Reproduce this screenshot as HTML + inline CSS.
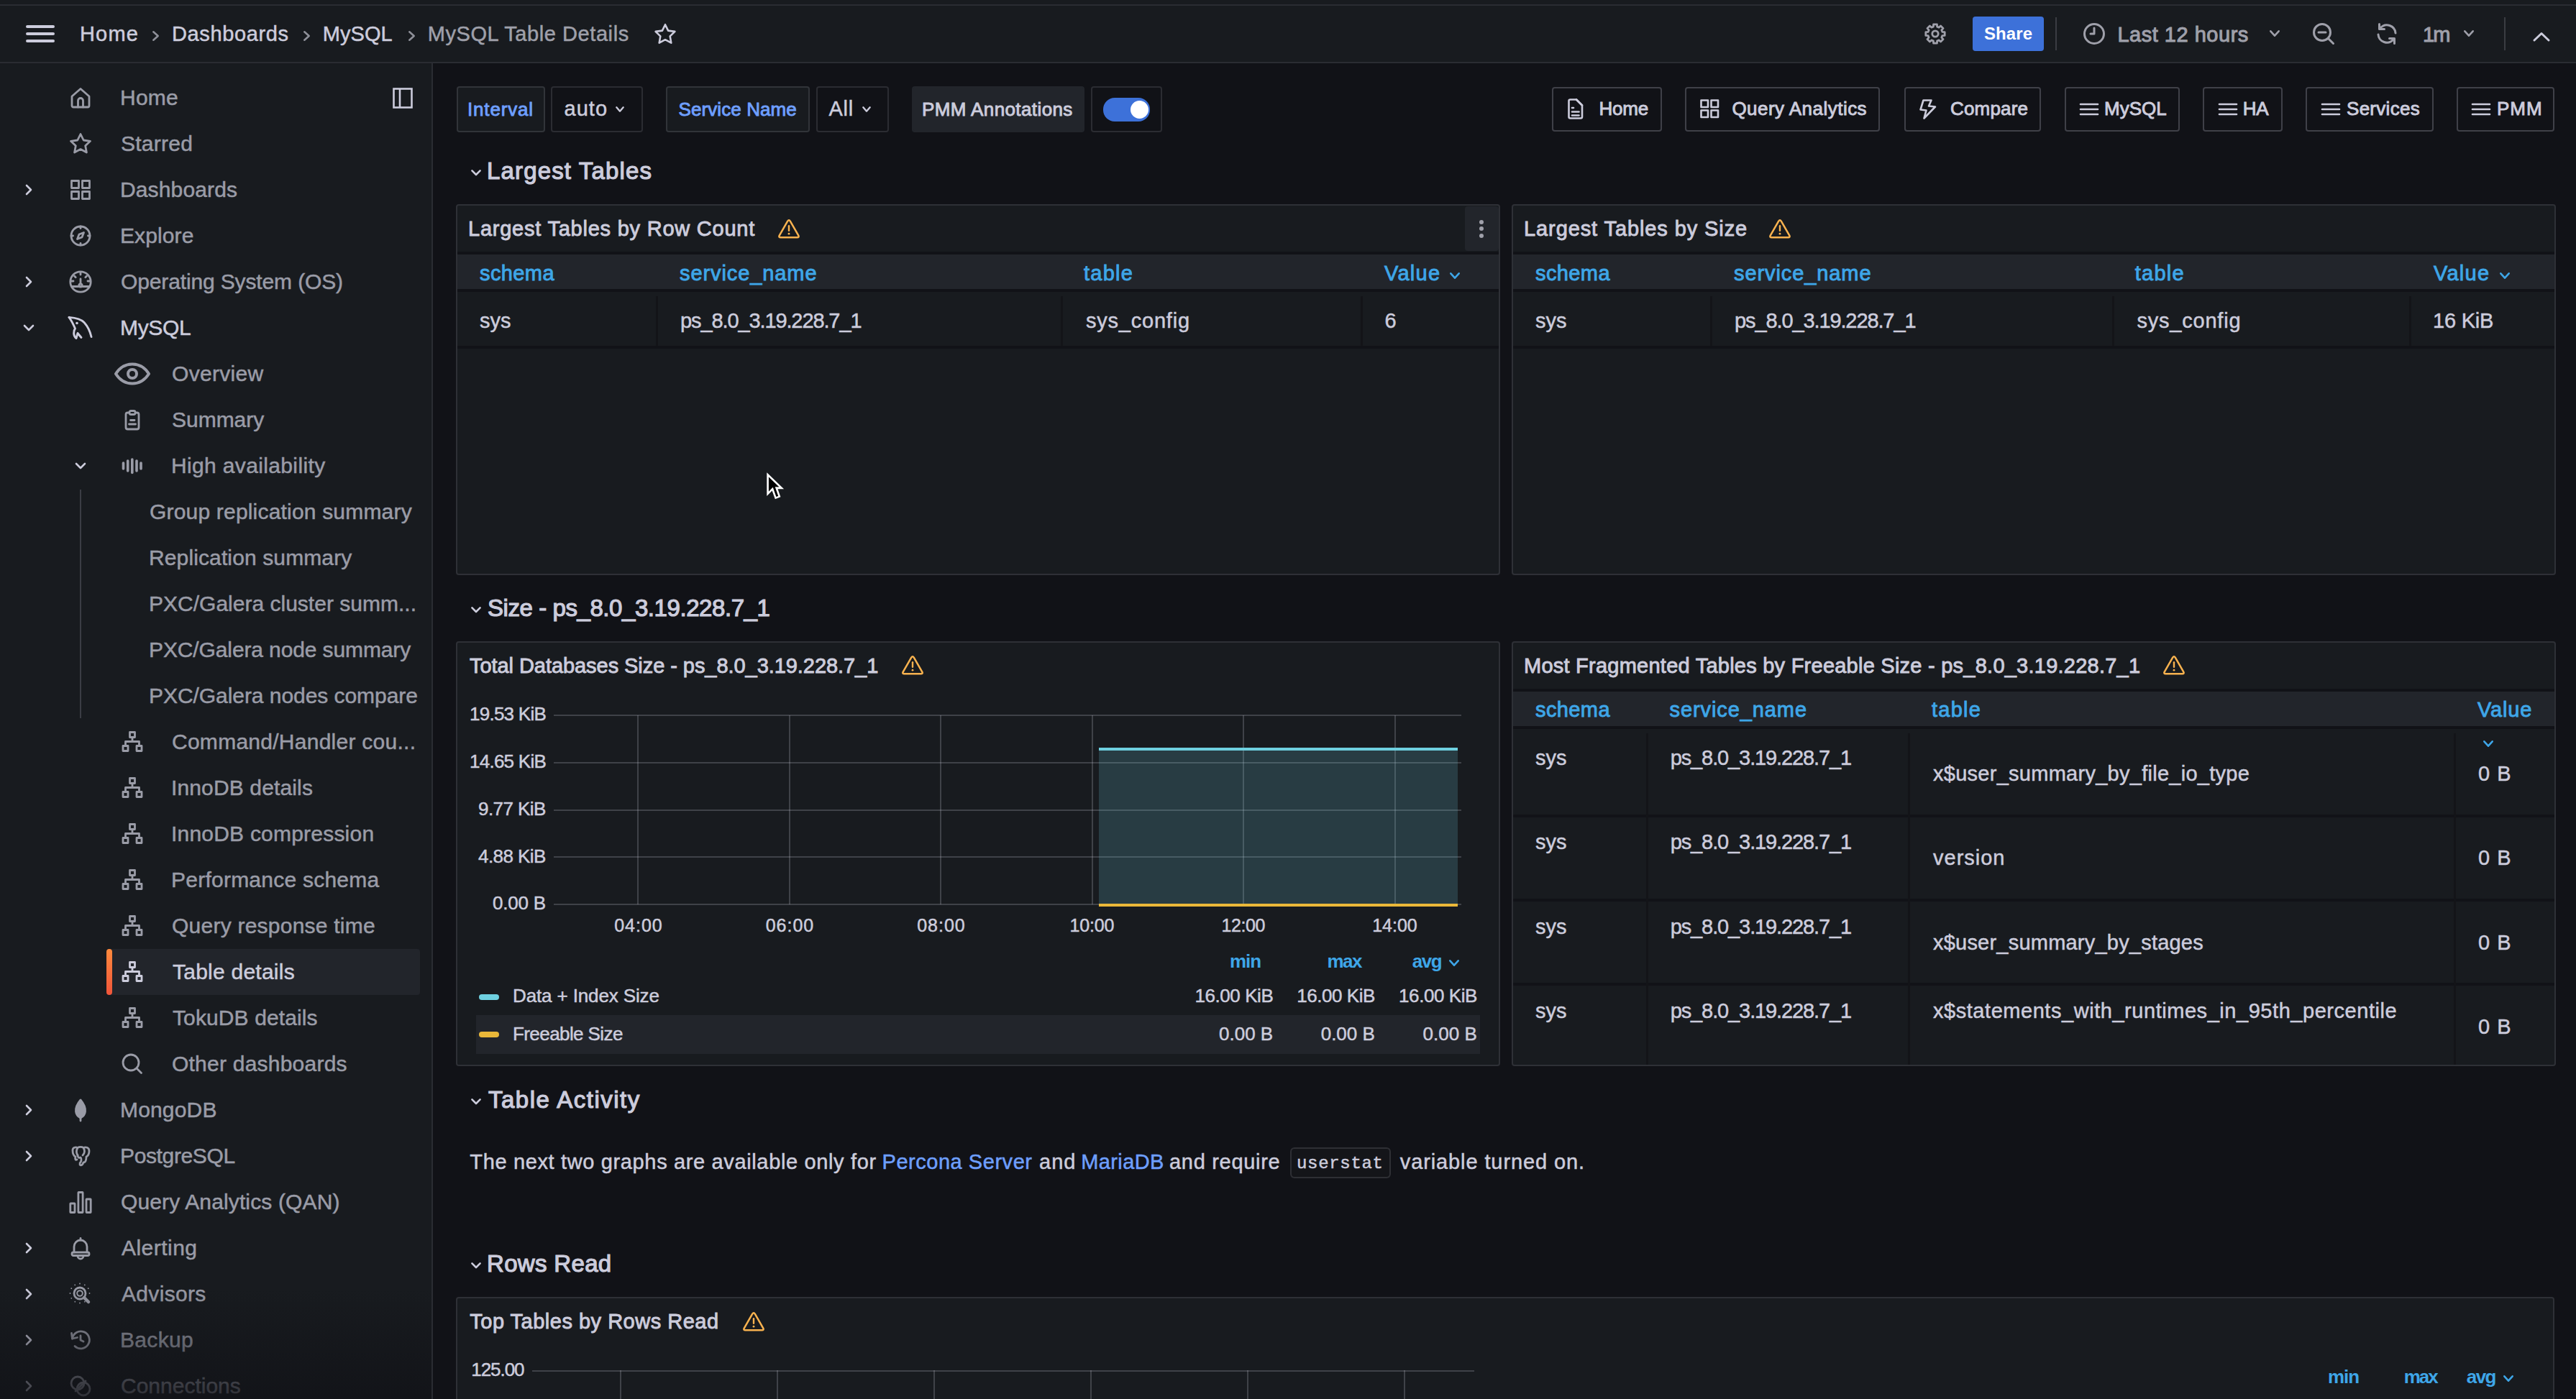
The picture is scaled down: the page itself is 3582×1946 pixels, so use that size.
<!DOCTYPE html>
<html><head><meta charset="utf-8"><title>MySQL Table Details</title>
<style>
html,body{margin:0;padding:0;}
body{width:3582px;height:1946px;overflow:hidden;position:relative;background:#111217;font-family:"Liberation Sans",sans-serif;color:#ccccdc;}
.t{position:absolute;white-space:nowrap;line-height:1;}
.r{position:absolute;}
svg.r{overflow:visible;}
</style></head><body>
<div class="r" style="left:0.00px;top:0.00px;width:3582.00px;height:88.00px;background:#181b1f;"></div>
<div class="r" style="left:0.00px;top:6.00px;width:3582.00px;height:2.00px;background:#2a2c32;"></div>
<div class="r" style="left:0.00px;top:86.00px;width:3582.00px;height:2.00px;background:#2a2c32;"></div>
<div class="r" style="left:0.00px;top:88.00px;width:600.00px;height:1858.00px;background:#181b1f;"></div>
<div class="r" style="left:600.00px;top:88.00px;width:2.00px;height:1858.00px;background:#2a2c32;"></div>
<div class="r" style="left:36.00px;top:35.00px;width:40.00px;height:4.00px;background:#ccccdc;border-radius:2px;"></div>
<div class="r" style="left:36.00px;top:45.00px;width:40.00px;height:4.00px;background:#ccccdc;border-radius:2px;"></div>
<div class="r" style="left:36.00px;top:55.00px;width:40.00px;height:4.00px;background:#ccccdc;border-radius:2px;"></div>
<div class="t" style="left:111.00px;top:33.00px;font-size:29px;color:#ccccdc;letter-spacing:1.167px;-webkit-text-stroke:0.50px #ccccdc;">Home</div>
<svg class="r" style="left:211.50px;top:43.00px;" width="9.00" height="14.00" viewBox="0 0 9 14"><polyline points="1.3,1.3 7.7,7 1.3,12.7" fill="none" stroke="#8e9099" stroke-width="2.6" stroke-linecap="round" stroke-linejoin="round"/></svg>
<div class="t" style="left:239.00px;top:33.00px;font-size:29px;color:#ccccdc;letter-spacing:0.622px;-webkit-text-stroke:0.50px #ccccdc;">Dashboards</div>
<svg class="r" style="left:421.60px;top:43.00px;" width="9.00" height="14.00" viewBox="0 0 9 14"><polyline points="1.3,1.3 7.7,7 1.3,12.7" fill="none" stroke="#8e9099" stroke-width="2.6" stroke-linecap="round" stroke-linejoin="round"/></svg>
<div class="t" style="left:448.70px;top:33.00px;font-size:29px;color:#ccccdc;letter-spacing:0.075px;-webkit-text-stroke:0.50px #ccccdc;">MySQL</div>
<svg class="r" style="left:567.80px;top:43.00px;" width="9.00" height="14.00" viewBox="0 0 9 14"><polyline points="1.3,1.3 7.7,7 1.3,12.7" fill="none" stroke="#8e9099" stroke-width="2.6" stroke-linecap="round" stroke-linejoin="round"/></svg>
<div class="t" style="left:594.70px;top:33.00px;font-size:29px;color:#9fa0aa;letter-spacing:0.572px;-webkit-text-stroke:0.50px #9fa0aa;">MySQL Table Details</div>
<svg class="r" style="left:909.00px;top:32.00px;" width="32.00" height="30.00" viewBox="0 0 32 30"><path d="M16 2.2 L20.1 10.6 L29.4 11.9 L22.7 18.4 L24.3 27.6 L16 23.2 L7.7 27.6 L9.3 18.4 L2.6 11.9 L11.9 10.6 Z" fill="none" stroke="#ccccdc" stroke-width="2.6" stroke-linejoin="round"/></svg>
<svg class="r" style="left:2668.00px;top:24.00px;" width="46.00" height="46.00" viewBox="0 0 46 46"><polygon points="19.10,13.58 20.36,13.15 20.56,9.82 25.44,9.82 25.64,13.15 26.90,13.58 28.10,14.17 30.59,11.96 34.04,15.41 31.83,17.90 32.42,19.10 32.85,20.36 36.18,20.56 36.18,25.44 32.85,25.64 32.42,26.90 31.83,28.10 34.04,30.59 30.59,34.04 28.10,31.83 26.90,32.42 25.64,32.85 25.44,36.18 20.56,36.18 20.36,32.85 19.10,32.42 17.90,31.83 15.41,34.04 11.96,30.59 14.17,28.10 13.58,26.90 13.15,25.64 9.82,25.44 9.82,20.56 13.15,20.36 13.58,19.10 14.17,17.90 11.96,15.41 15.41,11.96 17.90,14.17" fill="none" stroke="#9fa0aa" stroke-width="2.8" stroke-linejoin="round"/><circle cx="23" cy="23" r="4.2" fill="none" stroke="#9fa0aa" stroke-width="2.8"/></svg>
<div class="r" style="left:2743.00px;top:23.00px;width:99.00px;height:48.00px;background:#3d71d9;border-radius:4px;"></div>
<div class="t" style="left:2759.00px;top:35.00px;font-size:24px;color:#ffffff;font-weight:700;letter-spacing:0.100px;">Share</div>
<div class="r" style="left:2858.00px;top:24.00px;width:2.00px;height:46.00px;background:#3a3c42;"></div>
<svg class="r" style="left:2896.00px;top:31.00px;" width="32.00" height="32.00" viewBox="0 0 32 32"><circle cx="16" cy="16" r="13.5" fill="none" stroke="#9fa0aa" stroke-width="3"/><polyline points="16,8 16,16 11,16" fill="none" stroke="#9fa0aa" stroke-width="3" stroke-linecap="round" stroke-linejoin="round"/></svg>
<div class="t" style="left:2944.40px;top:34.00px;font-size:29px;color:#9fa0aa;letter-spacing:0.517px;-webkit-text-stroke:1.00px #9fa0aa;">Last 12 hours</div>
<svg class="r" style="left:3155.60px;top:42.00px;" width="14.00" height="9.00" viewBox="0 0 14 9"><polyline points="1.3,1.3 7,7.7 12.7,1.3" fill="none" stroke="#9fa0aa" stroke-width="2.6" stroke-linecap="round" stroke-linejoin="round"/></svg>
<svg class="r" style="left:3215.00px;top:31.00px;" width="32.00" height="32.00" viewBox="0 0 32 32"><circle cx="14" cy="14" r="11.5" fill="none" stroke="#9fa0aa" stroke-width="3"/><line x1="22.5" y1="22.5" x2="29.5" y2="29.5" stroke="#9fa0aa" stroke-width="3" stroke-linecap="round"/><line x1="9" y1="14" x2="19" y2="14" stroke="#9fa0aa" stroke-width="3" stroke-linecap="round"/></svg>
<svg class="r" style="left:3303.00px;top:31.00px;" width="32.00" height="32.00" viewBox="0 0 32 32"><g fill="none" stroke="#9fa0aa" stroke-width="3" stroke-linecap="round" stroke-linejoin="round"><path d="M28 15 A12 12 0 0 0 7 8"/><polyline points="5.5,2.5 5.5,9.5 12.5,9.5"/><path d="M4 17 A12 12 0 0 0 25 24"/><polyline points="26.5,29.5 26.5,22.5 19.5,22.5"/></g></svg>
<div class="t" style="left:3369.00px;top:34.00px;font-size:29px;color:#9fa0aa;letter-spacing:-2.000px;-webkit-text-stroke:1.00px #9fa0aa;">1m</div>
<svg class="r" style="left:3425.50px;top:42.00px;" width="14.00" height="9.00" viewBox="0 0 14 9"><polyline points="1.3,1.3 7,7.7 12.7,1.3" fill="none" stroke="#9fa0aa" stroke-width="2.6" stroke-linecap="round" stroke-linejoin="round"/></svg>
<div class="r" style="left:3482.00px;top:24.00px;width:2.00px;height:46.00px;background:#3a3c42;"></div>
<svg class="r" style="left:3522.00px;top:44.00px;" width="24.00" height="14.00" viewBox="0 0 24 14"><polyline points="2,12 12,2.5 22,12" fill="none" stroke="#ccccdc" stroke-width="3" stroke-linecap="round" stroke-linejoin="round"/></svg>
<div class="r" style="left:148.00px;top:1320.00px;width:436.00px;height:64.00px;background:#22252b;border-radius:4px;"></div>
<div class="r" style="left:148.00px;top:1320.00px;width:8.00px;height:64.00px;background:linear-gradient(180deg,#ff8a3d,#f0553a);border-radius:4px;"></div>
<div class="r" style="left:110.50px;top:681.00px;width:2.00px;height:318.00px;background:#3b3d44;"></div>
<svg class="r" style="left:96.00px;top:120.00px;" width="32.00" height="32.00" viewBox="0 0 32 32"><g fill="none" stroke="#9a9ca7" stroke-width="2.8" stroke-linecap="round" stroke-linejoin="round"><path d="M4 14 L16 3.5 L28 14 V27 a2 2 0 0 1 -2 2 H6 a2 2 0 0 1 -2 -2 Z"/><path d="M12.5 29 V20 a3.5 3.5 0 0 1 7 0 V29"/></g></svg>
<div class="t" style="left:167.00px;top:121.00px;font-size:30px;color:#9a9ca7;letter-spacing:0.233px;-webkit-text-stroke:0.50px #9a9ca7;">Home</div>
<svg class="r" style="left:96.00px;top:184.00px;" width="32.00" height="32.00" viewBox="0 0 32 32"><g fill="none" stroke="#9a9ca7" stroke-width="2.8" stroke-linecap="round" stroke-linejoin="round"><path d="M16 2.5 L20.2 11 L29.5 12.3 L22.7 18.8 L24.4 28 L16 23.6 L7.6 28 L9.3 18.8 L2.5 12.3 L11.8 11 Z"/></g></svg>
<div class="t" style="left:168.00px;top:185.00px;font-size:30px;color:#9a9ca7;letter-spacing:0.250px;-webkit-text-stroke:0.50px #9a9ca7;">Starred</div>
<svg class="r" style="left:35.00px;top:256.00px;" width="10.00" height="16.00" viewBox="0 0 10 16"><polyline points="2,2 8,8 2,14" fill="none" stroke="#ccccdc" stroke-width="2.6" stroke-linecap="round" stroke-linejoin="round"/></svg>
<svg class="r" style="left:96.00px;top:248.00px;" width="32.00" height="32.00" viewBox="0 0 32 32"><g fill="none" stroke="#9a9ca7" stroke-width="2.8" stroke-linecap="round" stroke-linejoin="round"><rect x="3.5" y="3.5" width="10" height="10"/><rect x="18.5" y="3.5" width="10" height="10"/><rect x="3.5" y="18.5" width="10" height="10"/><rect x="18.5" y="18.5" width="10" height="10"/></g></svg>
<div class="t" style="left:167.00px;top:249.00px;font-size:30px;color:#9a9ca7;letter-spacing:0.133px;-webkit-text-stroke:0.50px #9a9ca7;">Dashboards</div>
<svg class="r" style="left:96.00px;top:312.00px;" width="32.00" height="32.00" viewBox="0 0 32 32"><g fill="none" stroke="#9a9ca7" stroke-width="2.8" stroke-linecap="round" stroke-linejoin="round"><circle cx="16" cy="16" r="13"/><path d="M20.5 11.5 L18 18 L11.5 20.5 L14 14 Z"/><line x1="16" y1="3" x2="16" y2="5.5"/><line x1="16" y1="26.5" x2="16" y2="29"/><line x1="3" y1="16" x2="5.5" y2="16"/><line x1="26.5" y1="16" x2="29" y2="16"/></g></svg>
<div class="t" style="left:167.00px;top:313.00px;font-size:30px;color:#9a9ca7;letter-spacing:0.100px;-webkit-text-stroke:0.50px #9a9ca7;">Explore</div>
<svg class="r" style="left:35.00px;top:384.00px;" width="10.00" height="16.00" viewBox="0 0 10 16"><polyline points="2,2 8,8 2,14" fill="none" stroke="#ccccdc" stroke-width="2.6" stroke-linecap="round" stroke-linejoin="round"/></svg>
<svg class="r" style="left:96.00px;top:376.00px;" width="32.00" height="32.00" viewBox="0 0 32 32"><g fill="none" stroke="#9a9ca7" stroke-width="2.8" stroke-linecap="round" stroke-linejoin="round"><circle cx="16" cy="16" r="14.2"/><path d="M3.5 22.5 H28.5"/><path d="M16 3.5 V6"/><path d="M7.5 8 L9.2 9.7"/><path d="M24.5 8 L22.8 9.7"/><path d="M3.5 15 H6"/><path d="M26 15 H28.5"/><path d="M16 12 V19"/><circle cx="16" cy="21" r="2.2"/></g></svg>
<div class="t" style="left:168.00px;top:377.00px;font-size:30px;color:#9a9ca7;letter-spacing:-0.135px;-webkit-text-stroke:0.50px #9a9ca7;">Operating System (OS)</div>
<svg class="r" style="left:32.00px;top:451.00px;" width="16.00" height="10.00" viewBox="0 0 16 10"><polyline points="2,2 8,8 14,2" fill="none" stroke="#ccccdc" stroke-width="2.6" stroke-linecap="round" stroke-linejoin="round"/></svg>
<svg class="r" style="left:92.00px;top:436.00px;" width="40.00" height="40.00" viewBox="0 0 40 40"><g fill="none" stroke="#ccccdc" stroke-width="2.9" stroke-linecap="round" stroke-linejoin="round"><path d="M4 5.4 C 12 6, 20 7, 25 12.5 C 30 18, 33.5 26, 35 32.5"/><path d="M4 5.4 C 6 8, 9 13, 12.5 21 C 10 24, 9.5 31, 14 34.5 C 15 31, 15.5 29, 16 27.5 L 21 33.5"/></g><circle cx="15" cy="13.5" r="1.8" fill="#ccccdc"/></svg>
<div class="t" style="left:167.00px;top:441.00px;font-size:30px;color:#ccccdc;letter-spacing:-0.325px;-webkit-text-stroke:0.50px #ccccdc;">MySQL</div>
<svg class="r" style="left:158.00px;top:502.00px;" width="52.00" height="36.00" viewBox="0 0 52 36"><path d="M3 18 C 9 8.5, 17 4.5, 26 4.5 C 35 4.5, 43 8.5, 49 18 C 43 27.5, 35 31.5, 26 31.5 C 17 31.5, 9 27.5, 3 18 Z" fill="none" stroke="#9a9ca7" stroke-width="4" stroke-linejoin="round"/><circle cx="26" cy="18" r="6" fill="none" stroke="#9a9ca7" stroke-width="4"/></svg>
<div class="t" style="left:239.00px;top:505.00px;font-size:30px;color:#9a9ca7;letter-spacing:0.314px;-webkit-text-stroke:0.50px #9a9ca7;">Overview</div>
<svg class="r" style="left:167.50px;top:568.00px;" width="32.00" height="32.00" viewBox="0 0 32 32"><g fill="none" stroke="#9a9ca7" stroke-width="2.8" stroke-linecap="round" stroke-linejoin="round"><path d="M11.5 6 H9.5 a2.5 2.5 0 0 0 -2.5 2.5 V26.5 a2.5 2.5 0 0 0 2.5 2.5 H22.5 a2.5 2.5 0 0 0 2.5 -2.5 V8.5 a2.5 2.5 0 0 0 -2.5 -2.5 H20.5"/><rect x="12" y="3.5" width="8" height="5" rx="2"/><line x1="13.5" y1="16.5" x2="19" y2="16.5"/><line x1="11.5" y1="22" x2="20.5" y2="22"/></g></svg>
<div class="t" style="left:239.00px;top:569.00px;font-size:30px;color:#9a9ca7;letter-spacing:-0.017px;-webkit-text-stroke:0.50px #9a9ca7;">Summary</div>
<svg class="r" style="left:103.50px;top:643.00px;" width="16.00" height="10.00" viewBox="0 0 16 10"><polyline points="2,2 8,8 14,2" fill="none" stroke="#ccccdc" stroke-width="2.6" stroke-linecap="round" stroke-linejoin="round"/></svg>
<svg class="r" style="left:167.50px;top:632.00px;" width="32.00" height="32.00" viewBox="0 0 32 32"><g fill="none" stroke="#9a9ca7" stroke-width="3.6" stroke-linecap="round" stroke-linejoin="round"><line x1="3.5" y1="12" x2="3.5" y2="20"/><line x1="9.7" y1="9" x2="9.7" y2="23"/><line x1="15.8" y1="7" x2="15.8" y2="25.5"/><line x1="22" y1="9" x2="22" y2="23"/><line x1="28" y1="12" x2="28" y2="20"/></g></svg>
<div class="t" style="left:238.00px;top:633.00px;font-size:30px;color:#9a9ca7;letter-spacing:0.356px;-webkit-text-stroke:0.50px #9a9ca7;">High availability</div>
<div class="t" style="left:208.00px;top:697.00px;font-size:30px;color:#9a9ca7;letter-spacing:0.188px;-webkit-text-stroke:0.50px #9a9ca7;">Group replication summary</div>
<div class="t" style="left:207.00px;top:761.00px;font-size:30px;color:#9a9ca7;letter-spacing:0.122px;-webkit-text-stroke:0.50px #9a9ca7;">Replication summary</div>
<div class="t" style="left:207.00px;top:825.00px;font-size:30px;color:#9a9ca7;letter-spacing:0.008px;-webkit-text-stroke:0.50px #9a9ca7;">PXC/Galera cluster summ...</div>
<div class="t" style="left:207.00px;top:889.00px;font-size:30px;color:#9a9ca7;letter-spacing:-0.118px;-webkit-text-stroke:0.50px #9a9ca7;">PXC/Galera node summary</div>
<div class="t" style="left:207.00px;top:953.00px;font-size:30px;color:#9a9ca7;letter-spacing:-0.057px;-webkit-text-stroke:0.50px #9a9ca7;">PXC/Galera nodes compare</div>
<svg class="r" style="left:167.50px;top:1016.00px;" width="32.00" height="32.00" viewBox="0 0 32 32"><g fill="none" stroke="#9a9ca7" stroke-width="2.8" stroke-linecap="round" stroke-linejoin="round"><rect x="12.5" y="2.5" width="7" height="7"/><rect x="3" y="21.5" width="7" height="7"/><rect x="22" y="21.5" width="7" height="7"/><path d="M16 9.5 V15.5 M6.5 21.5 V15.5 H25.5 V21.5"/></g></svg>
<div class="t" style="left:239.00px;top:1017.00px;font-size:30px;color:#9a9ca7;letter-spacing:0.262px;-webkit-text-stroke:0.50px #9a9ca7;">Command/Handler cou...</div>
<svg class="r" style="left:167.50px;top:1080.00px;" width="32.00" height="32.00" viewBox="0 0 32 32"><g fill="none" stroke="#9a9ca7" stroke-width="2.8" stroke-linecap="round" stroke-linejoin="round"><rect x="12.5" y="2.5" width="7" height="7"/><rect x="3" y="21.5" width="7" height="7"/><rect x="22" y="21.5" width="7" height="7"/><path d="M16 9.5 V15.5 M6.5 21.5 V15.5 H25.5 V21.5"/></g></svg>
<div class="t" style="left:238.00px;top:1081.00px;font-size:30px;color:#9a9ca7;letter-spacing:0.138px;-webkit-text-stroke:0.50px #9a9ca7;">InnoDB details</div>
<svg class="r" style="left:167.50px;top:1144.00px;" width="32.00" height="32.00" viewBox="0 0 32 32"><g fill="none" stroke="#9a9ca7" stroke-width="2.8" stroke-linecap="round" stroke-linejoin="round"><rect x="12.5" y="2.5" width="7" height="7"/><rect x="3" y="21.5" width="7" height="7"/><rect x="22" y="21.5" width="7" height="7"/><path d="M16 9.5 V15.5 M6.5 21.5 V15.5 H25.5 V21.5"/></g></svg>
<div class="t" style="left:238.00px;top:1145.00px;font-size:30px;color:#9a9ca7;letter-spacing:0.212px;-webkit-text-stroke:0.50px #9a9ca7;">InnoDB compression</div>
<svg class="r" style="left:167.50px;top:1208.00px;" width="32.00" height="32.00" viewBox="0 0 32 32"><g fill="none" stroke="#9a9ca7" stroke-width="2.8" stroke-linecap="round" stroke-linejoin="round"><rect x="12.5" y="2.5" width="7" height="7"/><rect x="3" y="21.5" width="7" height="7"/><rect x="22" y="21.5" width="7" height="7"/><path d="M16 9.5 V15.5 M6.5 21.5 V15.5 H25.5 V21.5"/></g></svg>
<div class="t" style="left:238.00px;top:1209.00px;font-size:30px;color:#9a9ca7;letter-spacing:0.241px;-webkit-text-stroke:0.50px #9a9ca7;">Performance schema</div>
<svg class="r" style="left:167.50px;top:1272.00px;" width="32.00" height="32.00" viewBox="0 0 32 32"><g fill="none" stroke="#9a9ca7" stroke-width="2.8" stroke-linecap="round" stroke-linejoin="round"><rect x="12.5" y="2.5" width="7" height="7"/><rect x="3" y="21.5" width="7" height="7"/><rect x="22" y="21.5" width="7" height="7"/><path d="M16 9.5 V15.5 M6.5 21.5 V15.5 H25.5 V21.5"/></g></svg>
<div class="t" style="left:239.00px;top:1273.00px;font-size:30px;color:#9a9ca7;letter-spacing:0.233px;-webkit-text-stroke:0.50px #9a9ca7;">Query response time</div>
<svg class="r" style="left:167.50px;top:1336.00px;" width="32.00" height="32.00" viewBox="0 0 32 32"><g fill="none" stroke="#ccccdc" stroke-width="2.8" stroke-linecap="round" stroke-linejoin="round"><rect x="12.5" y="2.5" width="7" height="7"/><rect x="3" y="21.5" width="7" height="7"/><rect x="22" y="21.5" width="7" height="7"/><path d="M16 9.5 V15.5 M6.5 21.5 V15.5 H25.5 V21.5"/></g></svg>
<div class="t" style="left:240.00px;top:1337.00px;font-size:30px;color:#ccccdc;letter-spacing:0.242px;-webkit-text-stroke:0.50px #ccccdc;">Table details</div>
<svg class="r" style="left:167.50px;top:1400.00px;" width="32.00" height="32.00" viewBox="0 0 32 32"><g fill="none" stroke="#9a9ca7" stroke-width="2.8" stroke-linecap="round" stroke-linejoin="round"><rect x="12.5" y="2.5" width="7" height="7"/><rect x="3" y="21.5" width="7" height="7"/><rect x="22" y="21.5" width="7" height="7"/><path d="M16 9.5 V15.5 M6.5 21.5 V15.5 H25.5 V21.5"/></g></svg>
<div class="t" style="left:240.00px;top:1401.00px;font-size:30px;color:#9a9ca7;letter-spacing:0.115px;-webkit-text-stroke:0.50px #9a9ca7;">TokuDB details</div>
<svg class="r" style="left:167.50px;top:1464.00px;" width="32.00" height="32.00" viewBox="0 0 32 32"><g fill="none" stroke="#9a9ca7" stroke-width="2.8" stroke-linecap="round" stroke-linejoin="round"><circle cx="14" cy="14" r="11"/><line x1="22" y1="22" x2="28.5" y2="28.5"/></g></svg>
<div class="t" style="left:239.00px;top:1465.00px;font-size:30px;color:#9a9ca7;letter-spacing:0.227px;-webkit-text-stroke:0.50px #9a9ca7;">Other dashboards</div>
<svg class="r" style="left:35.00px;top:1536.00px;" width="10.00" height="16.00" viewBox="0 0 10 16"><polyline points="2,2 8,8 2,14" fill="none" stroke="#ccccdc" stroke-width="2.6" stroke-linecap="round" stroke-linejoin="round"/></svg>
<svg class="r" style="left:96.00px;top:1528.00px;" width="32.00" height="32.00" viewBox="0 0 32 32"><g fill="none" stroke="#9a9ca7" stroke-width="2.8" stroke-linecap="round" stroke-linejoin="round"><path d="M16 2 C 11 8, 9 13, 9.5 18 C 10 23, 13 25.5, 16 27 C 19 25.5, 22 23, 22.5 18 C 23 13, 21 8, 16 2 Z" fill="#9a9ca7"/><line x1="16" y1="26" x2="16" y2="31"/></g></svg>
<div class="t" style="left:167.00px;top:1529.00px;font-size:30px;color:#9a9ca7;letter-spacing:0.167px;-webkit-text-stroke:0.50px #9a9ca7;">MongoDB</div>
<svg class="r" style="left:35.00px;top:1600.00px;" width="10.00" height="16.00" viewBox="0 0 10 16"><polyline points="2,2 8,8 2,14" fill="none" stroke="#ccccdc" stroke-width="2.6" stroke-linecap="round" stroke-linejoin="round"/></svg>
<svg class="r" style="left:96.00px;top:1592.00px;" width="32.00" height="32.00" viewBox="0 0 32 32"><g fill="none" stroke="#9a9ca7" stroke-width="2.8" stroke-linecap="round" stroke-linejoin="round"><path d="M5 8 C 5 4, 9 3, 12 4.5 C 14 3, 18 3, 20 4.5 C 23 3, 28 4, 28 9 C 28 13, 26 16, 24 17 C 24 21, 23 25, 20 25 C 19 28, 17 30, 15 28 M12 4.5 C 10 8, 10 12, 12 15 M20 4.5 C 22 8, 22 12, 19 15 M5 8 C 5 13, 7 16, 9 17 C 8 20, 9 22, 11 21"/><path d="M12 15 C 12 18, 14 19, 16 18 C 18 20, 17 24, 15 26"/></g></svg>
<div class="t" style="left:167.00px;top:1593.00px;font-size:30px;color:#9a9ca7;letter-spacing:-0.367px;-webkit-text-stroke:0.50px #9a9ca7;">PostgreSQL</div>
<svg class="r" style="left:96.00px;top:1656.00px;" width="32.00" height="32.00" viewBox="0 0 32 32"><g fill="none" stroke="#9a9ca7" stroke-width="2.8" stroke-linecap="round" stroke-linejoin="round"><rect x="1.8" y="18" width="6.2" height="12.5" rx="0.5"/><rect x="12.9" y="2.5" width="6.2" height="28" rx="0.5"/><rect x="24" y="12" width="6.2" height="18.5" rx="0.5"/></g></svg>
<div class="t" style="left:168.00px;top:1657.00px;font-size:30px;color:#9a9ca7;letter-spacing:0.135px;-webkit-text-stroke:0.50px #9a9ca7;">Query Analytics (QAN)</div>
<svg class="r" style="left:35.00px;top:1728.00px;" width="10.00" height="16.00" viewBox="0 0 10 16"><polyline points="2,2 8,8 2,14" fill="none" stroke="#ccccdc" stroke-width="2.6" stroke-linecap="round" stroke-linejoin="round"/></svg>
<svg class="r" style="left:96.00px;top:1720.00px;" width="32.00" height="32.00" viewBox="0 0 32 32"><g fill="none" stroke="#9a9ca7" stroke-width="2.8" stroke-linecap="round" stroke-linejoin="round"><path d="M7 22 V14 a9 9 0 0 1 18 0 V22"/><rect x="4" y="22" width="24" height="4.5" rx="2"/><path d="M12 27 a4 4 0 0 0 8 0"/><line x1="16" y1="2.5" x2="16" y2="5"/></g></svg>
<div class="t" style="left:169.00px;top:1721.00px;font-size:30px;color:#9a9ca7;letter-spacing:0.471px;-webkit-text-stroke:0.50px #9a9ca7;">Alerting</div>
<svg class="r" style="left:35.00px;top:1792.00px;" width="10.00" height="16.00" viewBox="0 0 10 16"><polyline points="2,2 8,8 2,14" fill="none" stroke="#ccccdc" stroke-width="2.6" stroke-linecap="round" stroke-linejoin="round"/></svg>
<svg class="r" style="left:96.00px;top:1784.00px;" width="32.00" height="32.00" viewBox="0 0 32 32"><g fill="none" stroke="#9a9ca7" stroke-width="2.8" stroke-linecap="round" stroke-linejoin="round"><circle cx="15" cy="15" r="8"/><circle cx="15" cy="15" r="3.8" stroke-width="2"/><line x1="21" y1="21" x2="27" y2="27" stroke-width="4.5"/><circle cx="15.0" cy="1.5" r="0.9" fill="#9a9ca7" stroke="none"/><circle cx="21.8" cy="3.3" r="0.9" fill="#9a9ca7" stroke="none"/><circle cx="26.7" cy="8.2" r="0.9" fill="#9a9ca7" stroke="none"/><circle cx="28.5" cy="15.0" r="0.9" fill="#9a9ca7" stroke="none"/><circle cx="21.8" cy="26.7" r="0.9" fill="#9a9ca7" stroke="none"/><circle cx="15.0" cy="28.5" r="0.9" fill="#9a9ca7" stroke="none"/><circle cx="8.3" cy="26.7" r="0.9" fill="#9a9ca7" stroke="none"/><circle cx="3.3" cy="21.8" r="0.9" fill="#9a9ca7" stroke="none"/><circle cx="1.5" cy="15.0" r="0.9" fill="#9a9ca7" stroke="none"/><circle cx="3.3" cy="8.2" r="0.9" fill="#9a9ca7" stroke="none"/><circle cx="8.2" cy="3.3" r="0.9" fill="#9a9ca7" stroke="none"/></g></svg>
<div class="t" style="left:169.00px;top:1785.00px;font-size:30px;color:#9a9ca7;letter-spacing:0.329px;-webkit-text-stroke:0.50px #9a9ca7;">Advisors</div>
<svg class="r" style="left:35.00px;top:1856.00px;" width="10.00" height="16.00" viewBox="0 0 10 16"><polyline points="2,2 8,8 2,14" fill="none" stroke="#ccccdc" stroke-width="2.6" stroke-linecap="round" stroke-linejoin="round"/></svg>
<svg class="r" style="left:96.00px;top:1848.00px;" width="32.00" height="32.00" viewBox="0 0 32 32"><g fill="none" stroke="#9a9ca7" stroke-width="2.8" stroke-linecap="round" stroke-linejoin="round"><path d="M4.5 14 A 12 12 0 1 1 8 24.5"/><polyline points="3.5,6.5 4.5,14 11.5,12.5"/><polyline points="16,10 16,16 20,18"/></g></svg>
<div class="t" style="left:167.00px;top:1849.00px;font-size:30px;color:#9a9ca7;letter-spacing:0.340px;-webkit-text-stroke:0.50px #9a9ca7;">Backup</div>
<svg class="r" style="left:35.00px;top:1920.00px;" width="10.00" height="16.00" viewBox="0 0 10 16"><polyline points="2,2 8,8 2,14" fill="none" stroke="#ccccdc" stroke-width="2.6" stroke-linecap="round" stroke-linejoin="round"/></svg>
<svg class="r" style="left:96.00px;top:1912.00px;" width="32.00" height="32.00" viewBox="0 0 32 32"><g fill="none" stroke="#9a9ca7" stroke-width="2.8" stroke-linecap="round" stroke-linejoin="round"><circle cx="12" cy="12" r="9"/><circle cx="20" cy="20" r="9"/><line x1="9" y1="23" x2="23" y2="9"/></g></svg>
<div class="t" style="left:168.00px;top:1913.00px;font-size:30px;color:#9a9ca7;-webkit-text-stroke:0.50px #9a9ca7;">Connections</div>
<svg class="r" style="left:546.00px;top:122.00px;" width="28.00" height="29.00" viewBox="0 0 28 29"><rect x="1.5" y="1.5" width="25" height="26" fill="none" stroke="#ccccdc" stroke-width="2.6"/><line x1="10" y1="1.5" x2="10" y2="27.5" stroke="#ccccdc" stroke-width="2.6"/></svg>
<div class="r" style="left:0.00px;top:1790.00px;width:600.00px;height:156.00px;background:linear-gradient(180deg,rgba(17,18,23,0) 0%,rgba(17,18,23,0.35) 45%,rgba(17,18,23,0.8) 100%);"></div>
<div class="r" style="left:634.60px;top:120.40px;width:123.20px;height:63.20px;background:#181b1f;border:2px solid rgba(204,204,220,0.14);border-radius:4px;box-sizing:border-box;"></div>
<div class="t" style="left:650.00px;top:139.00px;font-size:26px;color:#6e9fff;letter-spacing:0.829px;-webkit-text-stroke:0.90px #6e9fff;">Interval</div>
<div class="r" style="left:766.00px;top:120.40px;width:127.50px;height:63.20px;background:#111217;border:2px solid rgba(204,204,220,0.14);border-radius:4px;box-sizing:border-box;"></div>
<div class="t" style="left:784.50px;top:137.00px;font-size:29px;color:#ccccdc;letter-spacing:1.033px;-webkit-text-stroke:0.50px #ccccdc;">auto</div>
<svg class="r" style="left:856.00px;top:148.00px;" width="12.00" height="8.00" viewBox="0 0 12 8"><polyline points="1.3,1.3 6,6.7 10.7,1.3" fill="none" stroke="#ccccdc" stroke-width="2.4" stroke-linecap="round" stroke-linejoin="round"/></svg>
<div class="r" style="left:926.00px;top:120.40px;width:200.00px;height:63.20px;background:#181b1f;border:2px solid rgba(204,204,220,0.14);border-radius:4px;box-sizing:border-box;"></div>
<div class="t" style="left:943.50px;top:139.00px;font-size:26px;color:#6e9fff;letter-spacing:0.091px;-webkit-text-stroke:0.90px #6e9fff;">Service Name</div>
<div class="r" style="left:1134.50px;top:120.40px;width:101.50px;height:63.20px;background:#111217;border:2px solid rgba(204,204,220,0.14);border-radius:4px;box-sizing:border-box;"></div>
<div class="t" style="left:1152.40px;top:137.00px;font-size:29px;color:#ccccdc;letter-spacing:0.800px;-webkit-text-stroke:0.50px #ccccdc;">All</div>
<svg class="r" style="left:1198.50px;top:148.00px;" width="12.00" height="8.00" viewBox="0 0 12 8"><polyline points="1.3,1.3 6,6.7 10.7,1.3" fill="none" stroke="#ccccdc" stroke-width="2.4" stroke-linecap="round" stroke-linejoin="round"/></svg>
<div class="r" style="left:1267.70px;top:120.40px;width:240.30px;height:63.20px;background:#22252b;border:2px solid #22252b;border-radius:4px;box-sizing:border-box;"></div>
<div class="t" style="left:1282.00px;top:139.00px;font-size:26px;color:#ccccdc;letter-spacing:0.400px;-webkit-text-stroke:0.90px #ccccdc;">PMM Annotations</div>
<div class="r" style="left:1516.50px;top:120.40px;width:99.50px;height:63.20px;background:#111217;border:2px solid rgba(204,204,220,0.14);border-radius:4px;box-sizing:border-box;"></div>
<div class="r" style="left:1533.50px;top:136.00px;width:65.00px;height:32.50px;background:#3d71d9;border-radius:16px;"></div>
<div class="r" style="left:1572.00px;top:140.00px;width:24.50px;height:24.50px;background:#ffffff;border-radius:13px;"></div>
<div class="r" style="left:2158.30px;top:120.60px;width:152.70px;height:62.80px;background:#111217;border:2px solid rgba(204,204,220,0.25);border-radius:4px;box-sizing:border-box;"></div>
<svg class="r" style="left:2176.00px;top:136.00px;" width="32.00" height="32.00" viewBox="0 0 32 32"><g fill="none" stroke="#ccccdc" stroke-width="2.6" stroke-linecap="round" stroke-linejoin="round"><path d="M5.5 4.5 a2 2 0 0 1 2 -2 H16 L24 10.5 V26.5 a2 2 0 0 1 -2 2 H7.5 a2 2 0 0 1 -2 -2 Z"/><path d="M16 2.5 L24 10.5" /><line x1="10" y1="14" x2="12" y2="14"/><line x1="10" y1="19.5" x2="19.5" y2="19.5"/><line x1="10" y1="24.5" x2="19.5" y2="24.5"/></g></svg>
<div class="t" style="left:2223.40px;top:138.00px;font-size:26px;color:#ccccdc;letter-spacing:-0.167px;-webkit-text-stroke:0.90px #ccccdc;">Home</div>
<div class="r" style="left:2343.20px;top:120.60px;width:271.00px;height:62.80px;background:#111217;border:2px solid rgba(204,204,220,0.25);border-radius:4px;box-sizing:border-box;"></div>
<svg class="r" style="left:2361.50px;top:136.00px;" width="32.00" height="32.00" viewBox="0 0 32 32"><g fill="none" stroke="#ccccdc" stroke-width="2.6" stroke-linecap="round" stroke-linejoin="round"><rect x="3.5" y="3.5" width="9.5" height="9.5"/><rect x="17.5" y="3.5" width="9.5" height="9.5"/><rect x="3.5" y="17.5" width="9.5" height="9.5"/><rect x="17.5" y="17.5" width="9.5" height="9.5"/></g></svg>
<div class="t" style="left:2408.40px;top:138.00px;font-size:26px;color:#ccccdc;letter-spacing:0.471px;-webkit-text-stroke:0.90px #ccccdc;">Query Analytics</div>
<div class="r" style="left:2647.50px;top:120.60px;width:190.00px;height:62.80px;background:#111217;border:2px solid rgba(204,204,220,0.25);border-radius:4px;box-sizing:border-box;"></div>
<svg class="r" style="left:2667.00px;top:136.00px;" width="32.00" height="32.00" viewBox="0 0 32 32"><g fill="none" stroke="#ccccdc" stroke-width="2.6" stroke-linecap="round" stroke-linejoin="round"><path d="M7.5 3.5 H18.5 L15 11.5 L24 12.5 L8.5 28.5 L11.5 17.5 L3.5 16.5 Z"/></g></svg>
<div class="t" style="left:2712.00px;top:138.00px;font-size:26px;color:#ccccdc;letter-spacing:0.167px;-webkit-text-stroke:0.90px #ccccdc;">Compare</div>
<div class="r" style="left:2870.50px;top:120.60px;width:160.20px;height:62.80px;background:#111217;border:2px solid rgba(204,204,220,0.25);border-radius:4px;box-sizing:border-box;"></div>
<svg class="r" style="left:2888.60px;top:136.00px;" width="32.00" height="32.00" viewBox="0 0 32 32"><g fill="none" stroke="#ccccdc" stroke-width="2.6" stroke-linecap="round" stroke-linejoin="round"><line x1="4" y1="9" x2="28" y2="9"/><line x1="4" y1="16" x2="28" y2="16"/><line x1="4" y1="23" x2="28" y2="23"/></g></svg>
<div class="t" style="left:2926.00px;top:138.00px;font-size:26px;color:#ccccdc;-webkit-text-stroke:0.90px #ccccdc;">MySQL</div>
<div class="r" style="left:3063.00px;top:120.60px;width:110.70px;height:62.80px;background:#111217;border:2px solid rgba(204,204,220,0.25);border-radius:4px;box-sizing:border-box;"></div>
<svg class="r" style="left:3081.60px;top:136.00px;" width="32.00" height="32.00" viewBox="0 0 32 32"><g fill="none" stroke="#ccccdc" stroke-width="2.6" stroke-linecap="round" stroke-linejoin="round"><line x1="4" y1="9" x2="28" y2="9"/><line x1="4" y1="16" x2="28" y2="16"/><line x1="4" y1="23" x2="28" y2="23"/></g></svg>
<div class="t" style="left:3118.80px;top:138.00px;font-size:26px;color:#ccccdc;letter-spacing:-0.300px;-webkit-text-stroke:0.90px #ccccdc;">HA</div>
<div class="r" style="left:3206.40px;top:120.60px;width:177.30px;height:62.80px;background:#111217;border:2px solid rgba(204,204,220,0.25);border-radius:4px;box-sizing:border-box;"></div>
<svg class="r" style="left:3224.50px;top:136.00px;" width="32.00" height="32.00" viewBox="0 0 32 32"><g fill="none" stroke="#ccccdc" stroke-width="2.6" stroke-linecap="round" stroke-linejoin="round"><line x1="4" y1="9" x2="28" y2="9"/><line x1="4" y1="16" x2="28" y2="16"/><line x1="4" y1="23" x2="28" y2="23"/></g></svg>
<div class="t" style="left:3263.00px;top:138.00px;font-size:26px;color:#ccccdc;letter-spacing:0.286px;-webkit-text-stroke:0.90px #ccccdc;">Services</div>
<div class="r" style="left:3416.40px;top:120.60px;width:135.60px;height:62.80px;background:#111217;border:2px solid rgba(204,204,220,0.25);border-radius:4px;box-sizing:border-box;"></div>
<svg class="r" style="left:3434.00px;top:136.00px;" width="32.00" height="32.00" viewBox="0 0 32 32"><g fill="none" stroke="#ccccdc" stroke-width="2.6" stroke-linecap="round" stroke-linejoin="round"><line x1="4" y1="9" x2="28" y2="9"/><line x1="4" y1="16" x2="28" y2="16"/><line x1="4" y1="23" x2="28" y2="23"/></g></svg>
<div class="t" style="left:3472.00px;top:138.00px;font-size:26px;color:#ccccdc;letter-spacing:1.000px;-webkit-text-stroke:0.90px #ccccdc;">PMM</div>
<svg class="r" style="left:655.00px;top:235.50px;" width="14.00" height="9.00" viewBox="0 0 14 9"><polyline points="1.4,1.4 7,7 12.6,1.4" fill="none" stroke="#ccccdc" stroke-width="2.6" stroke-linecap="round" stroke-linejoin="round"/></svg>
<div class="t" style="left:677.00px;top:221.00px;font-size:33px;color:#ccccdc;letter-spacing:1.154px;-webkit-text-stroke:1.20px #ccccdc;">Largest Tables</div>
<svg class="r" style="left:655.00px;top:843.50px;" width="14.00" height="9.00" viewBox="0 0 14 9"><polyline points="1.4,1.4 7,7 12.6,1.4" fill="none" stroke="#ccccdc" stroke-width="2.6" stroke-linecap="round" stroke-linejoin="round"/></svg>
<div class="t" style="left:678.00px;top:829.00px;font-size:33px;color:#ccccdc;letter-spacing:-0.432px;-webkit-text-stroke:1.20px #ccccdc;">Size - ps_8.0_3.19.228.7_1</div>
<svg class="r" style="left:655.00px;top:1527.50px;" width="14.00" height="9.00" viewBox="0 0 14 9"><polyline points="1.4,1.4 7,7 12.6,1.4" fill="none" stroke="#ccccdc" stroke-width="2.6" stroke-linecap="round" stroke-linejoin="round"/></svg>
<div class="t" style="left:679.00px;top:1513.00px;font-size:33px;color:#ccccdc;letter-spacing:1.500px;-webkit-text-stroke:1.20px #ccccdc;">Table Activity</div>
<svg class="r" style="left:655.00px;top:1755.50px;" width="14.00" height="9.00" viewBox="0 0 14 9"><polyline points="1.4,1.4 7,7 12.6,1.4" fill="none" stroke="#ccccdc" stroke-width="2.6" stroke-linecap="round" stroke-linejoin="round"/></svg>
<div class="t" style="left:677.00px;top:1741.00px;font-size:33px;color:#ccccdc;letter-spacing:0.325px;-webkit-text-stroke:1.20px #ccccdc;">Rows Read</div>
<div class="r" style="left:634.00px;top:284.00px;width:1452.00px;height:516.00px;background:#181b1f;border:2px solid rgba(204,204,220,0.12);border-radius:4px;box-sizing:border-box;"></div>
<div class="t" style="left:651.00px;top:304.00px;font-size:29px;color:#ccccdc;letter-spacing:0.769px;-webkit-text-stroke:0.90px #ccccdc;">Largest Tables by Row Count</div>
<svg class="r" style="left:1082.00px;top:304.00px;" width="30.00" height="28.00" viewBox="0 0 30 28"><path d="M13.2 3.6 Q15 0.9 16.8 3.6 L28.3 23.6 Q29.6 26.2 26.6 26.2 H3.4 Q0.4 26.2 1.7 23.6 Z" fill="none" stroke="#f7b24f" stroke-width="2.5" stroke-linejoin="round"/><line x1="15" y1="10.2" x2="15" y2="16.8" stroke="#f7b24f" stroke-width="2.4" stroke-linecap="round"/><circle cx="15" cy="21.2" r="1.4" fill="#f7b24f"/></svg>
<div class="r" style="left:2036.60px;top:287.00px;width:47.40px;height:62.00px;background:#22252b;border-radius:4px;"></div>
<div class="r" style="left:2057.00px;top:305.50px;width:6.00px;height:6.00px;background:#9fa0aa;border-radius:3px;"></div>
<div class="r" style="left:2057.00px;top:315.00px;width:6.00px;height:6.00px;background:#9fa0aa;border-radius:3px;"></div>
<div class="r" style="left:2057.00px;top:324.50px;width:6.00px;height:6.00px;background:#9fa0aa;border-radius:3px;"></div>
<div class="r" style="left:636.00px;top:350.00px;width:1448.00px;height:4.00px;background:#111217;"></div>
<div class="r" style="left:636.00px;top:354.00px;width:1448.00px;height:48.00px;background:#22252b;"></div>
<div class="r" style="left:636.00px;top:402.00px;width:1448.00px;height:4.00px;background:#111217;"></div>
<div class="t" style="left:667.00px;top:366.00px;font-size:29px;color:#3ea6e8;letter-spacing:0.400px;-webkit-text-stroke:0.90px #3ea6e8;">schema</div>
<div class="t" style="left:945.00px;top:366.00px;font-size:29px;color:#3ea6e8;letter-spacing:0.909px;-webkit-text-stroke:0.90px #3ea6e8;">service_name</div>
<div class="t" style="left:1507.00px;top:366.00px;font-size:29px;color:#3ea6e8;letter-spacing:1.250px;-webkit-text-stroke:0.90px #3ea6e8;">table</div>
<div class="t" style="left:1925.00px;top:366.00px;font-size:29px;color:#3ea6e8;letter-spacing:1.250px;-webkit-text-stroke:0.90px #3ea6e8;">Value</div>
<svg class="r" style="left:2016.00px;top:379.00px;" width="14.00" height="9.00" viewBox="0 0 14 9"><polyline points="1.3,1.3 7,7.7 12.7,1.3" fill="none" stroke="#3ea6e8" stroke-width="2.6" stroke-linecap="round" stroke-linejoin="round"/></svg>
<div class="r" style="left:636.00px;top:481.00px;width:1448.00px;height:4.00px;background:#111217;"></div>
<div class="r" style="left:912.00px;top:412.00px;width:3.00px;height:69.00px;background:#131418;"></div>
<div class="r" style="left:1474.50px;top:412.00px;width:3.00px;height:69.00px;background:#131418;"></div>
<div class="r" style="left:1891.50px;top:412.00px;width:3.00px;height:69.00px;background:#131418;"></div>
<div class="t" style="left:667.00px;top:432.00px;font-size:29px;color:#ccccdc;-webkit-text-stroke:0.50px #ccccdc;">sys</div>
<div class="t" style="left:946.00px;top:432.00px;font-size:29px;color:#ccccdc;letter-spacing:-1.111px;-webkit-text-stroke:0.50px #ccccdc;">ps_8.0_3.19.228.7_1</div>
<div class="t" style="left:1510.00px;top:432.00px;font-size:29px;color:#ccccdc;letter-spacing:0.778px;-webkit-text-stroke:0.50px #ccccdc;">sys_config</div>
<div class="t" style="left:1925.50px;top:432.00px;font-size:29px;color:#ccccdc;-webkit-text-stroke:0.50px #ccccdc;">6</div>
<div class="r" style="left:2102.00px;top:284.00px;width:1452.00px;height:516.00px;background:#181b1f;border:2px solid rgba(204,204,220,0.12);border-radius:4px;box-sizing:border-box;"></div>
<div class="t" style="left:2119.00px;top:304.00px;font-size:29px;color:#ccccdc;letter-spacing:0.905px;-webkit-text-stroke:0.90px #ccccdc;">Largest Tables by Size</div>
<svg class="r" style="left:2460.00px;top:304.00px;" width="30.00" height="28.00" viewBox="0 0 30 28"><path d="M13.2 3.6 Q15 0.9 16.8 3.6 L28.3 23.6 Q29.6 26.2 26.6 26.2 H3.4 Q0.4 26.2 1.7 23.6 Z" fill="none" stroke="#f7b24f" stroke-width="2.5" stroke-linejoin="round"/><line x1="15" y1="10.2" x2="15" y2="16.8" stroke="#f7b24f" stroke-width="2.4" stroke-linecap="round"/><circle cx="15" cy="21.2" r="1.4" fill="#f7b24f"/></svg>
<div class="r" style="left:2104.00px;top:350.00px;width:1448.00px;height:4.00px;background:#111217;"></div>
<div class="r" style="left:2104.00px;top:354.00px;width:1448.00px;height:48.00px;background:#22252b;"></div>
<div class="r" style="left:2104.00px;top:402.00px;width:1448.00px;height:4.00px;background:#111217;"></div>
<div class="t" style="left:2135.00px;top:366.00px;font-size:29px;color:#3ea6e8;letter-spacing:0.400px;-webkit-text-stroke:0.90px #3ea6e8;">schema</div>
<div class="t" style="left:2411.00px;top:366.00px;font-size:29px;color:#3ea6e8;letter-spacing:0.909px;-webkit-text-stroke:0.90px #3ea6e8;">service_name</div>
<div class="t" style="left:2968.80px;top:366.00px;font-size:29px;color:#3ea6e8;letter-spacing:1.250px;-webkit-text-stroke:0.90px #3ea6e8;">table</div>
<div class="t" style="left:3384.00px;top:366.00px;font-size:29px;color:#3ea6e8;letter-spacing:1.250px;-webkit-text-stroke:0.90px #3ea6e8;">Value</div>
<svg class="r" style="left:3476.00px;top:379.00px;" width="14.00" height="9.00" viewBox="0 0 14 9"><polyline points="1.3,1.3 7,7.7 12.7,1.3" fill="none" stroke="#3ea6e8" stroke-width="2.6" stroke-linecap="round" stroke-linejoin="round"/></svg>
<div class="r" style="left:2104.00px;top:481.00px;width:1448.00px;height:4.00px;background:#111217;"></div>
<div class="r" style="left:2378.00px;top:412.00px;width:3.00px;height:69.00px;background:#131418;"></div>
<div class="r" style="left:2936.50px;top:412.00px;width:3.00px;height:69.00px;background:#131418;"></div>
<div class="r" style="left:3350.00px;top:412.00px;width:3.00px;height:69.00px;background:#131418;"></div>
<div class="t" style="left:2135.00px;top:432.00px;font-size:29px;color:#ccccdc;-webkit-text-stroke:0.50px #ccccdc;">sys</div>
<div class="t" style="left:2412.00px;top:432.00px;font-size:29px;color:#ccccdc;letter-spacing:-1.111px;-webkit-text-stroke:0.50px #ccccdc;">ps_8.0_3.19.228.7_1</div>
<div class="t" style="left:2971.50px;top:432.00px;font-size:29px;color:#ccccdc;letter-spacing:0.778px;-webkit-text-stroke:0.50px #ccccdc;">sys_config</div>
<div class="t" style="left:3383.00px;top:432.00px;font-size:29px;color:#ccccdc;letter-spacing:-0.200px;-webkit-text-stroke:0.50px #ccccdc;">16 KiB</div>
<div class="r" style="left:634.00px;top:892.00px;width:1452.00px;height:591.00px;background:#181b1f;border:2px solid rgba(204,204,220,0.12);border-radius:4px;box-sizing:border-box;"></div>
<div class="t" style="left:653.00px;top:912.00px;font-size:29px;color:#ccccdc;letter-spacing:-0.059px;-webkit-text-stroke:0.90px #ccccdc;">Total Databases Size - ps_8.0_3.19.228.7_1</div>
<svg class="r" style="left:1254.00px;top:911.00px;" width="30.00" height="28.00" viewBox="0 0 30 28"><path d="M13.2 3.6 Q15 0.9 16.8 3.6 L28.3 23.6 Q29.6 26.2 26.6 26.2 H3.4 Q0.4 26.2 1.7 23.6 Z" fill="none" stroke="#f7b24f" stroke-width="2.5" stroke-linejoin="round"/><line x1="15" y1="10.2" x2="15" y2="16.8" stroke="#f7b24f" stroke-width="2.4" stroke-linecap="round"/><circle cx="15" cy="21.2" r="1.4" fill="#f7b24f"/></svg>
<div class="r" style="left:769.70px;top:994.00px;width:1261.90px;height:2.00px;background:rgba(204,204,220,0.22);"></div>
<div class="r" style="left:769.70px;top:1059.80px;width:1261.90px;height:2.00px;background:rgba(204,204,220,0.22);"></div>
<div class="r" style="left:769.70px;top:1125.60px;width:1261.90px;height:2.00px;background:rgba(204,204,220,0.22);"></div>
<div class="r" style="left:769.70px;top:1191.40px;width:1261.90px;height:2.00px;background:rgba(204,204,220,0.22);"></div>
<div class="r" style="left:769.70px;top:1257.20px;width:1261.90px;height:2.00px;background:rgba(204,204,220,0.22);"></div>
<div class="r" style="left:886.20px;top:995.00px;width:2.00px;height:263.20px;background:rgba(204,204,220,0.22);"></div>
<div class="r" style="left:1096.70px;top:995.00px;width:2.00px;height:263.20px;background:rgba(204,204,220,0.22);"></div>
<div class="r" style="left:1307.20px;top:995.00px;width:2.00px;height:263.20px;background:rgba(204,204,220,0.22);"></div>
<div class="r" style="left:1517.70px;top:995.00px;width:2.00px;height:263.20px;background:rgba(204,204,220,0.22);"></div>
<div class="r" style="left:1728.20px;top:995.00px;width:2.00px;height:263.20px;background:rgba(204,204,220,0.22);"></div>
<div class="r" style="left:1938.70px;top:995.00px;width:2.00px;height:263.20px;background:rgba(204,204,220,0.22);"></div>
<div class="t" style="left:653.00px;top:980.00px;font-size:26px;color:#ccccdc;letter-spacing:-0.750px;-webkit-text-stroke:0.50px #ccccdc;">19.53 KiB</div>
<div class="t" style="left:653.00px;top:1046.00px;font-size:26px;color:#ccccdc;letter-spacing:-0.750px;-webkit-text-stroke:0.50px #ccccdc;">14.65 KiB</div>
<div class="t" style="left:665.00px;top:1112.00px;font-size:26px;color:#ccccdc;letter-spacing:-0.571px;-webkit-text-stroke:0.50px #ccccdc;">9.77 KiB</div>
<div class="t" style="left:665.00px;top:1178.00px;font-size:26px;color:#ccccdc;letter-spacing:-0.571px;-webkit-text-stroke:0.50px #ccccdc;">4.88 KiB</div>
<div class="t" style="left:685.00px;top:1243.00px;font-size:26px;color:#ccccdc;letter-spacing:-0.200px;-webkit-text-stroke:0.50px #ccccdc;">0.00 B</div>
<div class="t" style="left:854.20px;top:1275.00px;font-size:25px;color:#ccccdc;letter-spacing:1.000px;-webkit-text-stroke:0.50px #ccccdc;">04:00</div>
<div class="t" style="left:1064.70px;top:1275.00px;font-size:25px;color:#ccccdc;letter-spacing:1.000px;-webkit-text-stroke:0.50px #ccccdc;">06:00</div>
<div class="t" style="left:1275.20px;top:1275.00px;font-size:25px;color:#ccccdc;letter-spacing:1.000px;-webkit-text-stroke:0.50px #ccccdc;">08:00</div>
<div class="t" style="left:1487.50px;top:1275.00px;font-size:25px;color:#ccccdc;letter-spacing:-0.150px;-webkit-text-stroke:0.50px #ccccdc;">10:00</div>
<div class="t" style="left:1698.45px;top:1275.00px;font-size:25px;color:#ccccdc;letter-spacing:-0.375px;-webkit-text-stroke:0.50px #ccccdc;">12:00</div>
<div class="t" style="left:1908.20px;top:1275.00px;font-size:25px;color:#ccccdc;-webkit-text-stroke:0.50px #ccccdc;">14:00</div>
<div class="r" style="left:1528.00px;top:1040.00px;width:499.00px;height:219.00px;background:rgba(110,208,224,0.19);"></div>
<div class="r" style="left:1528.00px;top:1040.00px;width:499.00px;height:4.00px;background:#6ed0e0;"></div>
<div class="r" style="left:1528.00px;top:1257.00px;width:499.00px;height:4.00px;background:#eab839;"></div>
<div class="t" style="left:1710.00px;top:1324.00px;font-size:26px;color:#3ea6e8;font-weight:700;letter-spacing:-1.000px;">min</div>
<div class="t" style="left:1845.40px;top:1324.00px;font-size:26px;color:#3ea6e8;font-weight:700;letter-spacing:-1.500px;">max</div>
<div class="t" style="left:1963.80px;top:1324.00px;font-size:26px;color:#3ea6e8;font-weight:700;letter-spacing:-1.500px;">avg</div>
<svg class="r" style="left:2015.00px;top:1335.00px;" width="14.00" height="9.00" viewBox="0 0 14 9"><polyline points="1.3,1.3 7,7.7 12.7,1.3" fill="none" stroke="#3ea6e8" stroke-width="2.6" stroke-linecap="round" stroke-linejoin="round"/></svg>
<div class="r" style="left:666.00px;top:1383.00px;width:28.00px;height:8.00px;background:#6ed0e0;border-radius:4px;"></div>
<div class="t" style="left:713.00px;top:1372.00px;font-size:26px;color:#ccccdc;letter-spacing:-0.125px;-webkit-text-stroke:0.50px #ccccdc;">Data + Index Size</div>
<div class="t" style="left:1661.50px;top:1372.00px;font-size:26px;color:#ccccdc;letter-spacing:-0.438px;-webkit-text-stroke:0.50px #ccccdc;">16.00 KiB</div>
<div class="t" style="left:1803.20px;top:1372.00px;font-size:26px;color:#ccccdc;letter-spacing:-0.438px;-webkit-text-stroke:0.50px #ccccdc;">16.00 KiB</div>
<div class="t" style="left:1945.10px;top:1372.00px;font-size:26px;color:#ccccdc;letter-spacing:-0.438px;-webkit-text-stroke:0.50px #ccccdc;">16.00 KiB</div>
<div class="r" style="left:662.00px;top:1412.00px;width:1395.50px;height:53.50px;background:#22252b;"></div>
<div class="r" style="left:666.00px;top:1435.00px;width:28.00px;height:8.00px;background:#eab839;border-radius:4px;"></div>
<div class="t" style="left:713.00px;top:1425.00px;font-size:26px;color:#ccccdc;letter-spacing:-0.583px;-webkit-text-stroke:0.50px #ccccdc;">Freeable Size</div>
<div class="t" style="left:1695.00px;top:1425.00px;font-size:26px;color:#ccccdc;-webkit-text-stroke:0.50px #ccccdc;">0.00 B</div>
<div class="t" style="left:1836.70px;top:1425.00px;font-size:26px;color:#ccccdc;-webkit-text-stroke:0.50px #ccccdc;">0.00 B</div>
<div class="t" style="left:1978.60px;top:1425.00px;font-size:26px;color:#ccccdc;-webkit-text-stroke:0.50px #ccccdc;">0.00 B</div>
<div class="r" style="left:2102.00px;top:892.00px;width:1452.00px;height:591.00px;background:#181b1f;border:2px solid rgba(204,204,220,0.12);border-radius:4px;box-sizing:border-box;"></div>
<div class="t" style="left:2119.00px;top:912.00px;font-size:29px;color:#ccccdc;letter-spacing:0.242px;-webkit-text-stroke:0.90px #ccccdc;">Most Fragmented Tables by Freeable Size - ps_8.0_3.19.228.7_1</div>
<svg class="r" style="left:3008.00px;top:911.00px;" width="30.00" height="28.00" viewBox="0 0 30 28"><path d="M13.2 3.6 Q15 0.9 16.8 3.6 L28.3 23.6 Q29.6 26.2 26.6 26.2 H3.4 Q0.4 26.2 1.7 23.6 Z" fill="none" stroke="#f7b24f" stroke-width="2.5" stroke-linejoin="round"/><line x1="15" y1="10.2" x2="15" y2="16.8" stroke="#f7b24f" stroke-width="2.4" stroke-linecap="round"/><circle cx="15" cy="21.2" r="1.4" fill="#f7b24f"/></svg>
<div class="r" style="left:2104.00px;top:957.50px;width:1448.00px;height:4.00px;background:#111217;"></div>
<div class="r" style="left:2104.00px;top:961.50px;width:1448.00px;height:48.00px;background:#22252b;"></div>
<div class="r" style="left:2104.00px;top:1009.50px;width:1448.00px;height:4.00px;background:#111217;"></div>
<div class="t" style="left:2135.00px;top:973.00px;font-size:29px;color:#3ea6e8;letter-spacing:0.400px;-webkit-text-stroke:0.90px #3ea6e8;">schema</div>
<div class="t" style="left:2321.50px;top:973.00px;font-size:29px;color:#3ea6e8;letter-spacing:0.909px;-webkit-text-stroke:0.90px #3ea6e8;">service_name</div>
<div class="t" style="left:2686.00px;top:973.00px;font-size:29px;color:#3ea6e8;letter-spacing:1.250px;-webkit-text-stroke:0.90px #3ea6e8;">table</div>
<div class="t" style="left:3445.00px;top:973.00px;font-size:29px;color:#3ea6e8;letter-spacing:0.850px;-webkit-text-stroke:0.90px #3ea6e8;">Value</div>
<svg class="r" style="left:3453.00px;top:1030.00px;" width="14.00" height="9.00" viewBox="0 0 14 9"><polyline points="1.3,1.3 7,7.7 12.7,1.3" fill="none" stroke="#3ea6e8" stroke-width="2.6" stroke-linecap="round" stroke-linejoin="round"/></svg>
<div class="r" style="left:2104.00px;top:1133.00px;width:1448.00px;height:4.00px;background:#111217;"></div>
<div class="r" style="left:2104.00px;top:1250.00px;width:1448.00px;height:4.00px;background:#111217;"></div>
<div class="r" style="left:2104.00px;top:1367.00px;width:1448.00px;height:4.00px;background:#111217;"></div>
<div class="r" style="left:2288.50px;top:1020.00px;width:3.00px;height:461.00px;background:#131418;"></div>
<div class="r" style="left:2653.00px;top:1020.00px;width:3.00px;height:461.00px;background:#131418;"></div>
<div class="r" style="left:3412.00px;top:1020.00px;width:3.00px;height:461.00px;background:#131418;"></div>
<div class="t" style="left:2135.00px;top:1040.00px;font-size:29px;color:#ccccdc;-webkit-text-stroke:0.50px #ccccdc;">sys</div>
<div class="t" style="left:2322.70px;top:1040.00px;font-size:29px;color:#ccccdc;letter-spacing:-1.111px;-webkit-text-stroke:0.50px #ccccdc;">ps_8.0_3.19.228.7_1</div>
<div class="t" style="left:2688.00px;top:1062.00px;font-size:29px;color:#ccccdc;letter-spacing:0.269px;-webkit-text-stroke:0.50px #ccccdc;">x$user_summary_by_file_io_type</div>
<div class="t" style="left:3446.00px;top:1062.00px;font-size:29px;color:#ccccdc;letter-spacing:1.000px;-webkit-text-stroke:0.50px #ccccdc;">0 B</div>
<div class="t" style="left:2135.00px;top:1157.00px;font-size:29px;color:#ccccdc;-webkit-text-stroke:0.50px #ccccdc;">sys</div>
<div class="t" style="left:2322.70px;top:1157.00px;font-size:29px;color:#ccccdc;letter-spacing:-1.111px;-webkit-text-stroke:0.50px #ccccdc;">ps_8.0_3.19.228.7_1</div>
<div class="t" style="left:2688.00px;top:1179.00px;font-size:29px;color:#ccccdc;letter-spacing:1.000px;-webkit-text-stroke:0.50px #ccccdc;">version</div>
<div class="t" style="left:3446.00px;top:1179.00px;font-size:29px;color:#ccccdc;letter-spacing:1.000px;-webkit-text-stroke:0.50px #ccccdc;">0 B</div>
<div class="t" style="left:2135.00px;top:1275.00px;font-size:29px;color:#ccccdc;-webkit-text-stroke:0.50px #ccccdc;">sys</div>
<div class="t" style="left:2322.70px;top:1275.00px;font-size:29px;color:#ccccdc;letter-spacing:-1.111px;-webkit-text-stroke:0.50px #ccccdc;">ps_8.0_3.19.228.7_1</div>
<div class="t" style="left:2688.00px;top:1297.00px;font-size:29px;color:#ccccdc;letter-spacing:0.217px;-webkit-text-stroke:0.50px #ccccdc;">x$user_summary_by_stages</div>
<div class="t" style="left:3446.00px;top:1297.00px;font-size:29px;color:#ccccdc;letter-spacing:1.000px;-webkit-text-stroke:0.50px #ccccdc;">0 B</div>
<div class="t" style="left:2135.00px;top:1392.00px;font-size:29px;color:#ccccdc;-webkit-text-stroke:0.50px #ccccdc;">sys</div>
<div class="t" style="left:2322.70px;top:1392.00px;font-size:29px;color:#ccccdc;letter-spacing:-1.111px;-webkit-text-stroke:0.50px #ccccdc;">ps_8.0_3.19.228.7_1</div>
<div class="t" style="left:2688.00px;top:1392.00px;font-size:29px;color:#ccccdc;letter-spacing:0.545px;-webkit-text-stroke:0.50px #ccccdc;">x$statements_with_runtimes_in_95th_percentile</div>
<div class="t" style="left:3446.00px;top:1414.00px;font-size:29px;color:#ccccdc;letter-spacing:1.000px;-webkit-text-stroke:0.50px #ccccdc;">0 B</div>
<div class="t" style="left:653.30px;top:1602.00px;font-size:29px;color:#ccccdc;letter-spacing:0.643px;-webkit-text-stroke:0.50px #ccccdc;">The next two graphs are available only for </div>
<div class="t" style="left:1226.50px;top:1602.00px;font-size:29px;color:#6e9fff;letter-spacing:0.538px;-webkit-text-stroke:0.50px #6e9fff;">Percona Server</div>
<div class="t" style="left:1445.00px;top:1602.00px;font-size:29px;color:#ccccdc;letter-spacing:1.000px;-webkit-text-stroke:0.50px #ccccdc;">and</div>
<div class="t" style="left:1503.30px;top:1602.00px;font-size:29px;color:#6e9fff;letter-spacing:0.367px;-webkit-text-stroke:0.50px #6e9fff;">MariaDB</div>
<div class="t" style="left:1626.00px;top:1602.00px;font-size:29px;color:#ccccdc;letter-spacing:0.700px;-webkit-text-stroke:0.50px #ccccdc;">and require</div>
<div class="r" style="left:1794.00px;top:1595.50px;width:140.00px;height:43.00px;background:#141519;border:2px solid rgba(204,204,220,0.14);border-radius:6px;box-sizing:border-box;"></div>
<div class="t" style="left:1803.00px;top:1607.00px;font-size:24px;color:#ccccdc;letter-spacing:0.686px;font-family:'Liberation Mono',monospace;-webkit-text-stroke:0.50px #ccccdc;">userstat</div>
<div class="t" style="left:1946.80px;top:1602.00px;font-size:29px;color:#ccccdc;letter-spacing:0.889px;-webkit-text-stroke:0.50px #ccccdc;">variable turned on.</div>
<div class="r" style="left:634.00px;top:1804.00px;width:2918.00px;height:186.00px;background:#181b1f;border:2px solid rgba(204,204,220,0.12);border-radius:4px;box-sizing:border-box;"></div>
<div class="t" style="left:653.30px;top:1824.00px;font-size:29px;color:#ccccdc;letter-spacing:0.500px;-webkit-text-stroke:0.90px #ccccdc;">Top Tables by Rows Read</div>
<svg class="r" style="left:1033.00px;top:1824.00px;" width="30.00" height="28.00" viewBox="0 0 30 28"><path d="M13.2 3.6 Q15 0.9 16.8 3.6 L28.3 23.6 Q29.6 26.2 26.6 26.2 H3.4 Q0.4 26.2 1.7 23.6 Z" fill="none" stroke="#f7b24f" stroke-width="2.5" stroke-linejoin="round"/><line x1="15" y1="10.2" x2="15" y2="16.8" stroke="#f7b24f" stroke-width="2.4" stroke-linecap="round"/><circle cx="15" cy="21.2" r="1.4" fill="#f7b24f"/></svg>
<div class="r" style="left:740.00px;top:1906.00px;width:1310.00px;height:2.00px;background:rgba(204,204,220,0.22);"></div>
<div class="r" style="left:861.80px;top:1906.00px;width:2.00px;height:40.00px;background:rgba(204,204,220,0.22);"></div>
<div class="r" style="left:1079.80px;top:1906.00px;width:2.00px;height:40.00px;background:rgba(204,204,220,0.22);"></div>
<div class="r" style="left:1297.80px;top:1906.00px;width:2.00px;height:40.00px;background:rgba(204,204,220,0.22);"></div>
<div class="r" style="left:1515.80px;top:1906.00px;width:2.00px;height:40.00px;background:rgba(204,204,220,0.22);"></div>
<div class="r" style="left:1733.80px;top:1906.00px;width:2.00px;height:40.00px;background:rgba(204,204,220,0.22);"></div>
<div class="r" style="left:1951.80px;top:1906.00px;width:2.00px;height:40.00px;background:rgba(204,204,220,0.22);"></div>
<div class="t" style="left:655.30px;top:1892.00px;font-size:26px;color:#ccccdc;letter-spacing:-1.060px;-webkit-text-stroke:0.50px #ccccdc;">125.00</div>
<div class="t" style="left:3237.00px;top:1902.00px;font-size:26px;color:#3ea6e8;font-weight:700;letter-spacing:-1.000px;">min</div>
<div class="t" style="left:3342.70px;top:1902.00px;font-size:26px;color:#3ea6e8;font-weight:700;letter-spacing:-2.000px;">max</div>
<div class="t" style="left:3429.70px;top:1902.00px;font-size:26px;color:#3ea6e8;font-weight:700;letter-spacing:-1.500px;">avg</div>
<svg class="r" style="left:3481.00px;top:1913.00px;" width="14.00" height="9.00" viewBox="0 0 14 9"><polyline points="1.3,1.3 7,7.7 12.7,1.3" fill="none" stroke="#3ea6e8" stroke-width="2.6" stroke-linecap="round" stroke-linejoin="round"/></svg>
<svg class="r" style="left:1040.00px;top:640.00px;" width="80.00" height="80.00" viewBox="0 0 80 80"><path d="M27.6 20.2 L27.6 46.8 L34.2 40.2 L38.6 52.6 L43.8 50.6 L39.6 38.6 L46.8 38.8 Z" fill="#000" stroke="#fff" stroke-width="2.6" stroke-linejoin="miter"/></svg></body></html>
